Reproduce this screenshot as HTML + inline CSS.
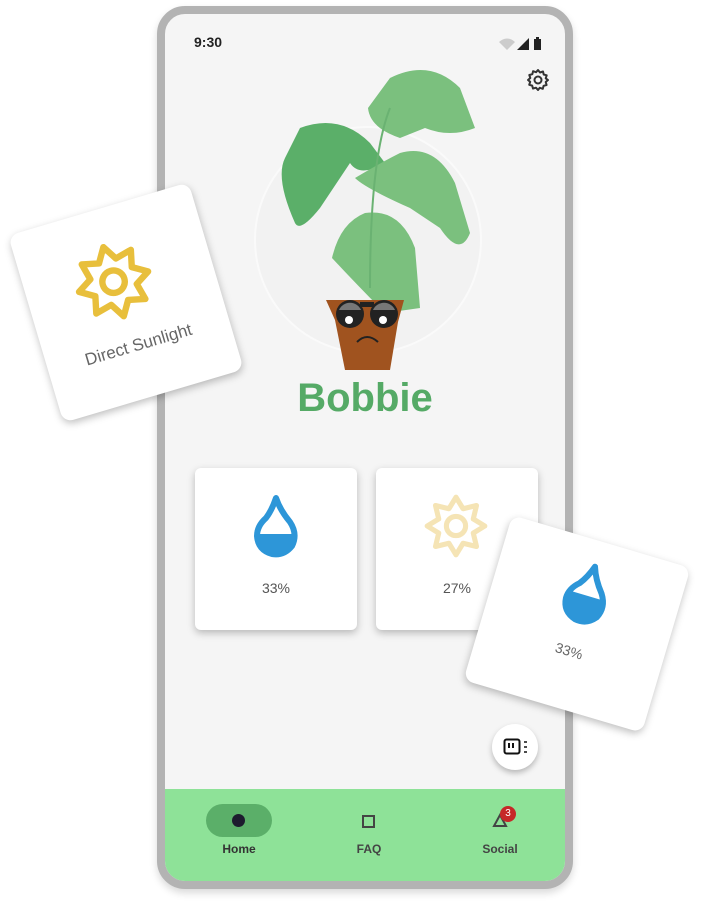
<!DOCTYPE html>
<html><head><style>
body{margin:0;width:706px;height:901px;background:#fff;position:relative;overflow:hidden;font-family:"Liberation Sans",sans-serif}
.phone{position:absolute;left:157px;top:6px;width:400px;height:867px;border:8px solid #b3b3b3;border-radius:28px;background:#f5f5f5;overflow:hidden;box-shadow:0 4px 8px rgba(0,0,0,.15)}
.card{position:absolute;background:#fff;border-radius:10px;box-shadow:0 3px 8px rgba(0,0,0,.25)}
.nav{position:absolute;left:0;bottom:0;width:400px;height:92px;background:#8ee298}
.lbl{position:absolute;font-size:12px;font-weight:bold;color:#333;text-align:center;width:80px}
</style></head><body>
<div class="phone">
 <div style="position:absolute;left:29px;top:20px;font-size:14px;font-weight:bold;color:#222">9:30</div>
 <svg style="position:absolute;left:332px;top:22px" width="52" height="16"><path d="M2 6 Q10 -1 18 6 L10 14Z" fill="#ccc"/><path d="M20 14 L32 2 L32 14Z" fill="#222"/><rect x="37" y="3" width="7" height="11" fill="#222"/><rect x="39" y="1" width="3" height="2" fill="#222"/></svg>
 <svg style="position:absolute;left:361px;top:54px" width="24" height="24" viewBox="0 0 24 24"><path d="M12 2l2 2.5 3-1 .7 3 3 .8-1 3L22 12l-2.3 2 .9 3-3 .8-.8 3-3-1L12 22l-2-2.3-3 .9-.8-3-3-.8 1-3L2 12l2.3-2-1-3 3-.8.8-3 3 1z" fill="none" stroke="#333" stroke-width="2" stroke-linejoin="round"/><circle cx="12" cy="12" r="3.5" fill="none" stroke="#333" stroke-width="2"/></svg>
 <div style="position:absolute;left:89px;top:112px;width:224px;height:224px;border-radius:50%;border:2px solid #fafafa;background:#f2f2f2"></div>
 <svg style="position:absolute;left:85px;top:44px" width="240" height="320" viewBox="0 0 240 320">
  <path d="M140 20 Q180 0 210 30 L225 70 Q200 80 175 70 L150 80 Q120 70 118 50Z" fill="#7bc07e"/>
  <path d="M50 70 Q90 55 120 85 L135 105 Q110 120 100 105 L70 150 Q50 175 45 165 Q25 120 35 100Z" fill="#5baf69"/>
  <path d="M150 95 Q185 85 205 125 L220 175 Q210 200 190 170 L160 150 Q115 130 105 120 Q130 105 150 95Z" fill="#7bc07e"/>
  <path d="M115 155 Q150 150 165 190 L170 250 L135 255 Q110 230 82 200 Q90 165 115 155Z" fill="#7bc07e"/>
  <path d="M140 50 Q120 100 120 230" stroke="#6ab272" stroke-width="2" fill="none"/>
  <path d="M76 242 L154 242 L148 264 L140 312 L95 312 L85 262Z" fill="#a0531f"/>
  <circle cx="100" cy="256" r="14" fill="#222"/><circle cx="134" cy="256" r="14" fill="#222"/>
  <rect x="110" y="244" width="14" height="5" fill="#222"/>
  <path d="M89 252 a12 12 0 0 1 22 0Z" fill="#777"/><path d="M123 252 a12 12 0 0 1 22 0Z" fill="#777"/>
  <circle cx="99" cy="262" r="4" fill="#fff"/><circle cx="133" cy="262" r="4" fill="#fff"/>
  <path d="M107 284 Q117 274 128 284" stroke="#222" stroke-width="2" fill="none"/>
 </svg>
 <div style="position:absolute;left:0;width:400px;top:362px;text-align:center;font-size:40px;font-weight:bold;color:#55aa66">Bobbie</div>
 <div class="card" style="left:30px;top:454px;width:162px;height:162px;border-radius:6px">
  <svg style="position:absolute;left:57px;top:26px" width="48" height="64" viewBox="0 0 48 64"><path d="M24 4 Q28 16 38 28 Q46 40 40 52 Q32 62 20 60 Q6 56 5 42 Q5 32 14 24 Q20 16 24 4Z" fill="none" stroke="#2d96d8" stroke-width="6" stroke-linejoin="round"/><path d="M4 40 L44 40 Q44 60 24 60 Q4 60 4 40Z" fill="#2d96d8"/></svg>
  <div style="position:absolute;top:112px;width:162px;text-align:center;font-size:14px;color:#555">33%</div>
 </div>
 <div class="card" style="left:211px;top:454px;width:162px;height:162px;border-radius:6px">
  <svg style="position:absolute;left:48px;top:26px" width="64" height="64" viewBox="0 0 100 100"><polygon points="50,5 61,23 82,18 77,39 95,50 77,61 82,82 61,77 50,95 39,77 18,82 23,61 5,50 23,39 18,18 39,23" fill="none" stroke="#f5e4b5" stroke-width="8" stroke-linejoin="round"/><circle cx="50" cy="50" r="15" fill="none" stroke="#f5e4b5" stroke-width="8"/></svg>
  <div style="position:absolute;top:112px;width:162px;text-align:center;font-size:14px;color:#555">27%</div>
 </div>
 <div style="position:absolute;left:327px;top:710px;width:46px;height:46px;border-radius:50%;background:#fff;box-shadow:0 3px 6px rgba(0,0,0,.25)">
  <svg style="position:absolute;left:11px;top:14px" width="26" height="18"><rect x="1.5" y="1.5" width="15" height="14" rx="2" fill="none" stroke="#111" stroke-width="2"/><rect x="5" y="5" width="2" height="5" fill="#111"/><rect x="9" y="5" width="2" height="5" fill="#111"/><path d="M21 4h3M21 9h3M21 14h3" stroke="#111" stroke-width="1.5"/></svg>
 </div>
 <div class="nav">
  <div style="position:absolute;left:41px;top:15px;width:66px;height:33px;border-radius:17px;background:#5baf69"></div>
  <div style="position:absolute;left:67px;top:25px;width:13px;height:13px;border-radius:50%;background:#1d1b2e"></div>
  <div class="lbl" style="left:34px;top:53px">Home</div>
  <div style="position:absolute;left:197px;top:26px;width:9px;height:9px;border:2px solid #444"></div>
  <div class="lbl" style="left:164px;top:53px;color:#444">FAQ</div>
  <svg style="position:absolute;left:327px;top:23px" width="16" height="16"><path d="M8 3 L14 14 L2 14Z" fill="none" stroke="#444" stroke-width="2"/></svg>
  <div style="position:absolute;left:335px;top:17px;width:16px;height:16px;border-radius:50%;background:#c62828;color:#fff;font-size:10px;text-align:center;line-height:16px">3</div>
  <div class="lbl" style="left:295px;top:53px;color:#444">Social</div>
 </div>
</div>
<div class="card" style="left:32px;top:205px;width:188px;height:195px;transform:rotate(-16.5deg)">
 <svg style="position:absolute;left:48px;top:34px" width="80" height="80" viewBox="0 0 100 100"><polygon points="50,5 61,23 82,18 77,39 95,50 77,61 82,82 61,77 50,95 39,77 18,82 23,61 5,50 23,39 18,18 39,23" fill="none" stroke="#e8bf3c" stroke-width="8" stroke-linejoin="round"/><circle cx="50" cy="50" r="14" fill="none" stroke="#e8bf3c" stroke-width="8"/></svg>
 <div style="position:absolute;top:132px;width:188px;text-align:center;font-size:17px;color:#666">Direct Sunlight</div>
</div>
<div class="card" style="left:484px;top:538px;width:186px;height:172px;transform:rotate(16.5deg)">
 <svg style="position:absolute;left:70px;top:22px" width="48" height="64" viewBox="0 0 48 64"><path d="M24 4 Q28 16 38 28 Q46 40 40 52 Q32 62 20 60 Q6 56 5 42 Q5 32 14 24 Q20 16 24 4Z" fill="none" stroke="#2d96d8" stroke-width="6" stroke-linejoin="round"/><path d="M4 34 L44 34 Q46 60 24 60 Q4 60 4 34Z" fill="#2d96d8"/></svg>
 <div style="position:absolute;top:106px;width:186px;text-align:center;font-size:14px;color:#666">33%</div>
</div>
</body></html>
